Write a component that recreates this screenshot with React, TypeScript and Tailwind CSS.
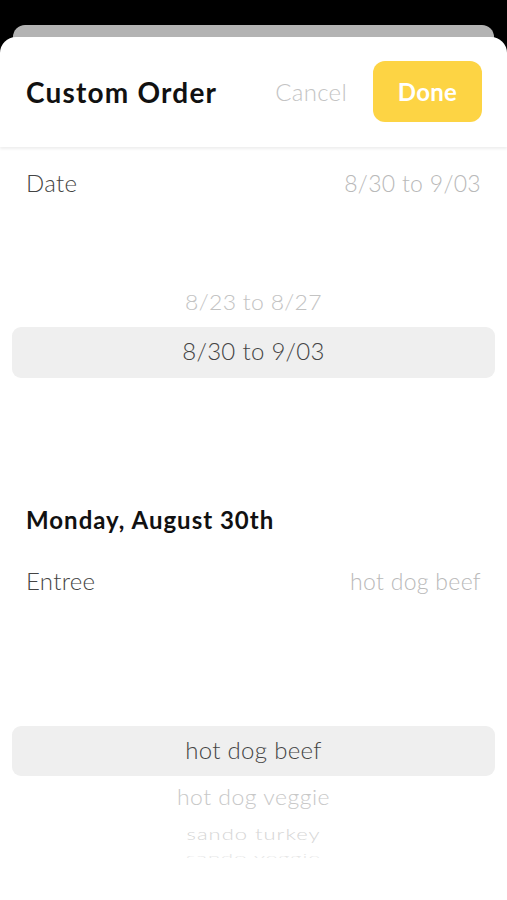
import React from "react";

const font = { fontFamily: "Lato, 'Open Sans', sans-serif" };

function Row({ label, value }: { label: string; value: string }) {
  return (
    <div className="flex h-[72px] items-center justify-between px-[26px]">
      <span className="text-[24px] font-light tracking-[0.3px] text-[#444444]">{label}</span>
      <span className="text-[23px] font-light tracking-[0.3px] text-[#b9b9b9]">{value}</span>
    </div>
  );
}

export default function App() {
  return (
    <div className="h-[900px] w-[507px] overflow-hidden bg-black" style={font}>
      <div className="pt-[25px]">
        <div className="mx-[13px] h-[28px] rounded-t-[12px] bg-[#b3b3b3]" />
        <div className="relative -mt-[16px] h-[900px] rounded-t-[16px] bg-white">
          {/* header */}
          <div className="flex h-[110px] items-center justify-between rounded-t-[16px] pb-[1px] pl-[26px] pr-[25px] shadow-[0_2px_3px_rgba(0,0,0,0.07)]">
            <span className="text-[28px] font-bold tracking-[1.2px] text-[#111111]">Custom Order</span>
            <div className="flex items-center gap-[26px]">
              <span className="text-[24px] font-light tracking-[0.3px] text-[#c4c4c4]">Cancel</span>
              <button className="flex h-[61px] w-[109px] items-center justify-center rounded-[12px] bg-[#fdd444] text-[24px] font-bold tracking-[0.3px] text-white">
                Done
              </button>
            </div>
          </div>

          <Row label="Date" value="8/30 to 9/03" />

          {/* picker 1 */}
          <div className="mt-[25px] h-[216px] overflow-hidden px-[12px]">
            <div className="pt-[40px]">
              <div className="flex h-[34px] scale-y-[0.95] items-center justify-center text-[23px] font-light tracking-[0.3px] text-[#c3c3c3]">
                8/23 to 8/27
              </div>
            </div>
            <div className="mt-[9px] flex h-[51px] items-center justify-center rounded-[9px] bg-[#efefef] pb-[3px] text-[24px] font-light tracking-[0.3px] text-[#444444]">
              8/30 to 9/03
            </div>
          </div>

          <div className="mt-[35px] flex h-[50px] items-center px-[26px]">
            <span className="text-[24px] font-bold tracking-[1px] text-[#111111]">Monday, August 30th</span>
          </div>

          <Row label="Entree" value="hot dog beef" />

          {/* picker 2 */}
          <div className="mt-[25px] h-[216px] overflow-hidden px-[12px]">
            <div className="mt-[84px] flex h-[50px] items-center justify-center rounded-[9px] bg-[#efefef] pb-[3px] text-[24px] font-light tracking-[0.3px] text-[#444444]">
              hot dog beef
            </div>
            <div className="mt-[6px] flex h-[30px] scale-y-[0.92] items-center justify-center text-[23px] font-light tracking-[0.5px] text-[#c8c8c8]">
              hot dog veggie
            </div>
            <div className="mt-[10px] flex h-[24px] scale-y-[0.72] items-center justify-center text-[22px] font-light tracking-[1px] text-[#d6d6d6]">
              sando turkey
            </div>
            <div className="mt-[3px] flex h-[16px] scale-y-[0.4] items-center justify-center text-[22px] font-light tracking-[1px] text-[#e6e6e6]">
              sando veggie
            </div>
          </div>
        </div>
      </div>
    </div>
  );
}
